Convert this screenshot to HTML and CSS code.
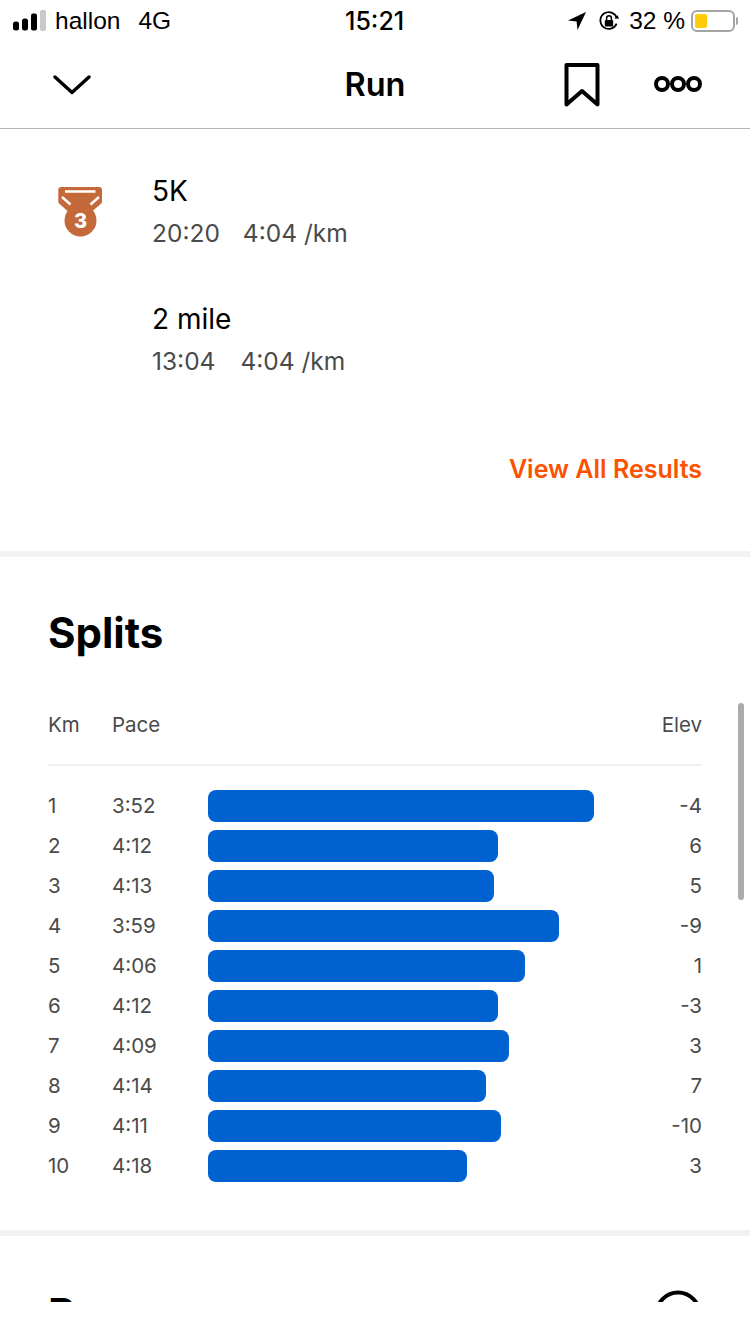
FILE: index.html
```html
<!DOCTYPE html>
<html lang="en">
<head>
<meta charset="utf-8">
<title>Run</title>
<link rel="stylesheet" href="styles.css">
</head>
<body>
<div class="page">
  <header class="status">
    <div class="status-left">
      <svg class="signal" width="34" height="22" viewBox="0 0 34 22"><rect x="0" y="11.500" width="6" height="9" rx="2.500" fill="#000"/><rect x="9" y="8.500" width="6" height="12" rx="2.500" fill="#000"/><rect x="18" y="3.500" width="6" height="17" rx="2" fill="#000"/><rect x="27" y="0" width="6" height="21" rx="2" fill="#c9c9c9"/></svg>
      <span>hallon</span><span class="net">4G</span>
    </div>
    <div class="status-time">15:21</div>
    <div class="status-right">
      <svg class="loc" width="20" height="20" viewBox="0 0 20 20"><path d="M19 1 1 9.500l8.600.9.900 8.600z" fill="#000"/></svg>
      <svg class="lock" width="22" height="22" viewBox="0 0 22 22"><path d="M18.600 13.600A8.400 8.400 0 1 1 18.800 8" fill="none" stroke="#000" stroke-width="1.800"/><path d="m16.400 8.600 4.600.2-1.400-3.600z" fill="#000"/><rect x="6.800" y="10" width="8.400" height="6.400" rx="1" fill="#000"/><path d="M8.600 10V8.200a2.400 2.400 0 0 1 4.800 0V10" fill="none" stroke="#000" stroke-width="1.500"/></svg>
      <span class="pct">32 %</span>
      <div class="battery"><div class="battery-fill"></div></div>
      <div class="battery-tip"></div>
    </div>
  </header>
  <nav class="nav">
    <svg class="chev" width="38" height="20" viewBox="0 0 38 20"><path d="M2 2 19 17.500 36 2" fill="none" stroke="#000" stroke-width="3.400" stroke-linecap="round" stroke-linejoin="round"/></svg>
    <h1 class="nav-title">Run</h1>
    <div class="nav-actions">
      <svg width="38" height="46" viewBox="0 0 38 46"><path d="M3.500 3h31v39.500L19 29 3.500 42.500z" fill="none" stroke="#000" stroke-width="4" stroke-linejoin="round"/></svg>
      <svg class="dots" width="48" height="18" viewBox="0 0 48 18"><g fill="none" stroke="#000" stroke-width="4"><circle cx="8" cy="9" r="6"/><circle cx="24" cy="9" r="6"/><circle cx="40" cy="9" r="6"/></g></svg>
    </div>
  </nav>
  <section class="results">
    <div class="result">
      <svg class="medal" width="48" height="52" viewBox="0 0 48 52"><path d="M5 1h38a3 3 0 0 1 3 3v11.500a3 3 0 0 1-1 2.200L33 28H15L3.300 17.700a3 3 0 0 1-1-2.200V4a3 3 0 0 1 2.700-3z" fill="#c4693a"/><circle cx="24.500" cy="34.500" r="16" fill="#c4693a"/><path d="M9 5.500h30.500M6 11l8.500 7.500M43 11l-8.500 7.500" fill="none" stroke="#fff" stroke-width="2.400"/><text x="24.500" y="41.500" class="medal-num">3</text></svg>
      <div class="result-text">
        <div class="result-name">5K</div>
        <div class="result-meta"><span>20:20</span><span>4:04 /km</span></div>
      </div>
    </div>
    <div class="result">
      <div class="medal-space"></div>
      <div class="result-text">
        <div class="result-name">2 mile</div>
        <div class="result-meta tight"><span>13:04</span><span>4:04 /km</span></div>
      </div>
    </div>
    <div class="all-results">View All Results</div>
  </section>
  <section class="splits">
    <h2 class="heading">Splits</h2>
    <div class="split-head"><span class="col-km">Km</span><span class="col-pace">Pace</span><span class="col-elev">Elev</span></div>
    <div class="split-rows">
      <div class="split-row"><span class="col-km">1</span><span class="col-pace">3:52</span><div class="track"><div class="bar" style="width:386px"></div></div><span class="col-elev">-4</span></div>
      <div class="split-row"><span class="col-km">2</span><span class="col-pace">4:12</span><div class="track"><div class="bar" style="width:290px"></div></div><span class="col-elev">6</span></div>
      <div class="split-row"><span class="col-km">3</span><span class="col-pace">4:13</span><div class="track"><div class="bar" style="width:286px"></div></div><span class="col-elev">5</span></div>
      <div class="split-row"><span class="col-km">4</span><span class="col-pace">3:59</span><div class="track"><div class="bar" style="width:351px"></div></div><span class="col-elev">-9</span></div>
      <div class="split-row"><span class="col-km">5</span><span class="col-pace">4:06</span><div class="track"><div class="bar" style="width:317px"></div></div><span class="col-elev">1</span></div>
      <div class="split-row"><span class="col-km">6</span><span class="col-pace">4:12</span><div class="track"><div class="bar" style="width:290px"></div></div><span class="col-elev">-3</span></div>
      <div class="split-row"><span class="col-km">7</span><span class="col-pace">4:09</span><div class="track"><div class="bar" style="width:301px"></div></div><span class="col-elev">3</span></div>
      <div class="split-row"><span class="col-km">8</span><span class="col-pace">4:14</span><div class="track"><div class="bar" style="width:278px"></div></div><span class="col-elev">7</span></div>
      <div class="split-row"><span class="col-km">9</span><span class="col-pace">4:11</span><div class="track"><div class="bar" style="width:293px"></div></div><span class="col-elev">-10</span></div>
      <div class="split-row"><span class="col-km">10</span><span class="col-pace">4:18</span><div class="track"><div class="bar" style="width:259px"></div></div><span class="col-elev">3</span></div>
    </div>
  </section>
  <section class="next">
    <h2 class="heading">Pace</h2>
    <svg class="info" width="48" height="48" viewBox="0 0 48 48"><circle cx="24" cy="24" r="21.500" fill="none" stroke="#000" stroke-width="4"/></svg>
  </section>
  <div class="scrollbar"></div>
</div>
</body>
</html>
```
FILE: styles.css
```css
* { box-sizing: border-box; }
html, body { margin: 0; padding: 0; background: #fff; }
body { font-family: Inter, "Liberation Sans", sans-serif; color: #000; }
.page { position: relative; width: 750px; height: 1302px; overflow: hidden; background: #fff; }
.status { display: flex; align-items: center; justify-content: space-between; height: 41px; padding: 0 12px 0 13px; font-family: "Liberation Sans", sans-serif; font-size: 24.500px; position: relative; }
.status-left { display: flex; align-items: center; }
.signal { margin-right: 8px; }
.net { margin-left: 18px; }
.status-time { position: absolute; left: 345px; top: 6px; font-size: 25px; font-weight: 500; font-family: Inter, sans-serif; }
.status-right { display: flex; align-items: center; }
.loc { margin-right: 11px; }
.lock { margin-right: 9px; }
.pct { margin-right: 6px; }
.battery { width: 44px; height: 22px; border: 2px solid #a5a5a5; border-radius: 6px; padding: 2px; }
.battery-fill { width: 12px; height: 14px; background: #ffcc0a; border-radius: 2px; }
.battery-tip { width: 2px; height: 8px; margin-left: 1px; background: #a5a5a5; border-radius: 0 2px 2px 0; }
.nav { position: relative; display: flex; align-items: center; justify-content: space-between; height: 88px; padding: 0 48px 0 53px; border-bottom: 1px solid #b5b5b5; }
.nav-title { position: absolute; left: 0; right: 0; top: 0; margin: 0; text-align: center; font-size: 32.500px; font-weight: 600; line-height: 88px; }
.nav-actions { display: flex; align-items: center; gap: 53px; position: relative; }
.dots { position: relative; top: -1px; }
.results { height: 422px; padding: 40px 48px 0 56px; }
.result { display: flex; height: 128px; }
.medal { margin-top: 17px; flex: none; }
.medal-space { width: 48px; flex: none; }
.medal-num { font-family: Inter, sans-serif; font-size: 20px; font-weight: 800; fill: #fff; text-anchor: middle; }
.result-text { margin-left: 48px; padding-top: 5px; }
.result-name { font-size: 28px; line-height: 34px; }
.result-meta { display: flex; gap: 23px; font-size: 24.500px; line-height: 32px; margin-top: 9px; color: #4a4a4a; }
.result-meta.tight { gap: 25px; }
.all-results { margin-top: 29px; text-align: right; color: #fc5200; font-size: 25px; font-weight: 600; line-height: 30px; }
.splits { height: 685px; padding: 51px 48px 0; border-top: 6px solid #f2f2f2; border-bottom: 6px solid #f2f2f2; }
.heading { margin: 0; font-size: 42px; font-weight: 700; line-height: 50px; }
.split-head { display: flex; justify-content: space-between; height: 63px; margin-top: 45px; padding-top: 8px; border-bottom: 2px solid #f0f0f0; font-size: 20.500px; line-height: 28px; color: #4a4a4a; }
.split-head .col-pace { margin-right: auto; }
.col-km { width: 64px; }
.col-pace { width: 96px; }
.col-elev { text-align: right; }
.split-rows { display: flex; flex-direction: column; gap: 8px; margin-top: 24px; }
.split-row { display: flex; align-items: center; height: 32px; font-size: 20.500px; color: #4a4a4a; }
.split-row span { padding-bottom: 2px; }
.track { flex: 1; }
.bar { height: 32px; background: #0061d1; border-radius: 8px; }
.next { position: relative; padding: 53px 48px 0; }
.info { position: absolute; right: 48px; top: 54px; }
.scrollbar { position: absolute; left: 738px; top: 703px; width: 6px; height: 197px; background: #ababab; border-radius: 3px; }
```
